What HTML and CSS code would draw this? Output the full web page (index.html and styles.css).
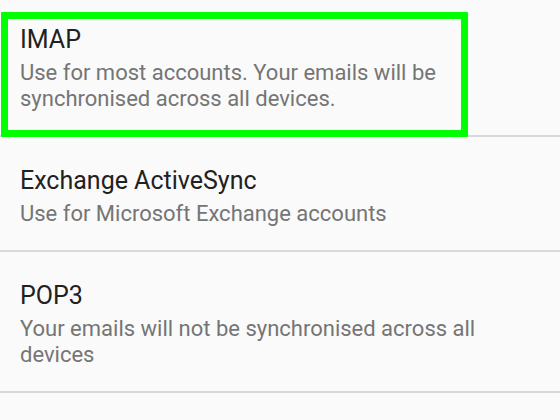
FILE: index.html
```html
<!DOCTYPE html>
<html>
<head>
<meta charset="utf-8">
<link rel="stylesheet" href="styles.css">
</head>
<body>
<div class="list">
  <div class="row row-first">
    <div class="title">IMAP</div>
    <div class="desc">Use for most accounts. Your emails will be synchronised across all devices.</div>
    <div class="highlight"></div>
  </div>
  <div class="row">
    <div class="title">Exchange ActiveSync</div>
    <div class="desc">Use for Microsoft Exchange accounts</div>
  </div>
  <div class="row row-last">
    <div class="title">POP3</div>
    <div class="desc">Your emails will not be synchronised across all devices</div>
  </div>
</div>
</body>
</html>
```
FILE: styles.css
```css
html, body {
  margin: 0;
  padding: 0;
  background: #fafafa;
}
body {
  width: 560px;
  height: 420px;
  overflow: hidden;
  font-family: Roboto, "Noto Sans", sans-serif;
}
.list {
  display: flex;
  flex-direction: column;
  margin-top: -4px;
}
.row {
  position: relative;
  padding: 29px 20px 23px 20px;
  border-bottom: 2px solid #d9d9d9;
}
.row-first {
  padding-right: 100px;
}
.row-last {
  padding-right: 60px;
}
.title {
  font-size: 25px;
  line-height: 30px;
  color: #212121;
}
.desc {
  margin-top: 5px;
  font-size: 22px;
  line-height: 26px;
  color: #757575;
}
.highlight {
  position: absolute;
  left: 1px;
  top: 16px;
  width: 453px;
  height: 111px;
  border: 7px solid #00ff00;
  border-radius: 1px;
}
```
